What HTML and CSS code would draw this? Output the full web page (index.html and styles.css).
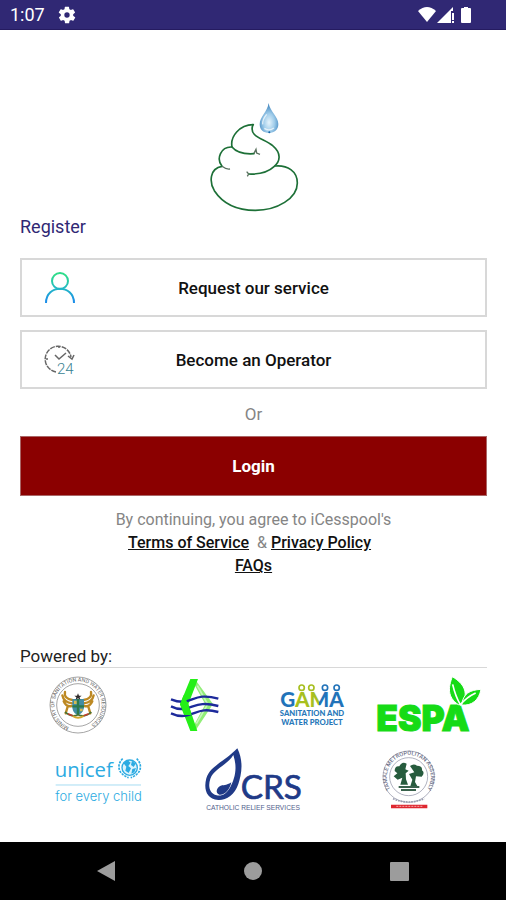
FILE: index.html
```html
<!DOCTYPE html>
<html lang="en">
<head>
    <meta charset="UTF-8">
    <meta name="viewport" content="width=device-width, initial-scale=1.0">
    <title>iCesspool</title>
    <link rel="stylesheet" href="styles.css">
</head>
<body>

    <header class="status-bar">
        <span class="time">1:07</span>
        <svg class="gear" width="20" height="20" viewBox="0 0 24 24">
            <path fill="#fff" d="M19.4 13a7.500 7.500 0 0 0 0-2l2.100-1.600a.5.5 0 0 0 .1-.6l-2-3.500a.5.5 0 0 0-.6-.2l-2.500 1a7.300 7.300 0 0 0-1.700-1l-.4-2.600a.5.5 0 0 0-.5-.4h-4a.5.5 0 0 0-.5.4l-.4 2.600a7.700 7.700 0 0 0-1.700 1l-2.500-1a.5.5 0 0 0-.6.2l-2 3.500a.5.5 0 0 0 .1.6L4.600 11a8 8 0 0 0 0 2l-2.100 1.600a.5.5 0 0 0-.1.600l2 3.500c.1.200.4.300.6.200l2.500-1a7.300 7.300 0 0 0 1.700 1l.4 2.600c0 .3.200.4.5.4h4c.2 0 .5-.2.5-.4l.4-2.600a7.700 7.700 0 0 0 1.700-1l2.500 1c.2.100.5 0 .6-.2l2-3.500a.5.5 0 0 0-.1-.6zM12 15.200a3.200 3.200 0 1 1 0-6.400 3.200 3.200 0 0 1 0 6.400z"/>
        </svg>
        <svg class="signals" width="56" height="18" viewBox="0 0 56 18" fill="#fff">
            <path d="M0 5Q9-3 18 5L9 16z"/>
            <path d="M19 17L35 1v4h-2v12zM34 7h2v7h-2zM34 15h2v2h-2z"/>
            <path d="M46 1h4v1h2q1 0 1 1v13q0 1-1 1h-8q-1 0-1-1V3q0-1 1-1h2z"/>
        </svg>
    </header>

    <main class="container">
        <svg class="logo" width="90" height="112" viewBox="27 18 270 336">
            <defs>
                <radialGradient id="water" cx="50%" cy="65%" r="60%">
                    <stop offset="0" stop-color="#e6f4fc"/>
                    <stop offset="0.500" stop-color="#9fccea"/>
                    <stop offset="1" stop-color="#3f84bd"/>
                </radialGradient>
            </defs>
            <g fill="none" stroke="#1d7037" stroke-width="5" stroke-linecap="round" stroke-linejoin="round">
                <path d="M160 89C118 90 90 124 96 156C62 154 48 192 66 214C28 220 28 262 43 287C70 328 115 346 166 346C232 346 292 310 292 264C292 228 262 210 226 213"/>
                <path d="M159 89C144 127 194 130 218 152C246 176 240 200 222 215C202 234 174 238 146 237"/>
                <path d="M96 156C109 172 132 178 162 176"/>
            </g>
            <path d="M66 214Q79 224 90 222M162 175L168 163L170 174L180 178M146 237L140 230M146 237L142 244" fill="none" stroke="#59705e" stroke-width="4"/>
            <path d="M206 24C203 49 179 65 179 88C179 105 191 114 207 114C224 114 235 103 235 87C235 65 209 48 206 24z" fill="url(#water)"/>
            <path d="M200 58C190 70 187 78 188 88M193 100Q207 110 222 99" fill="none" stroke="#fff" stroke-width="4" opacity="0.700"/>
            <circle cx="208" cy="112" r="3" fill="#1765a8"/>
        </svg>

        <h1>Register</h1>

        <button class="option" type="button">
            <svg width="32" height="32" viewBox="0 0 32 32" fill="none" stroke-width="2">
                <defs>
                    <linearGradient id="person" x1="0" y1="0" x2="0" y2="32" gradientUnits="userSpaceOnUse">
                        <stop offset="0.100" stop-color="#2fdc8b"/>
                        <stop offset="0.500" stop-color="#22b9c4"/>
                        <stop offset="0.900" stop-color="#1d8fe8"/>
                    </linearGradient>
                </defs>
                <circle cx="16" cy="9" r="8" stroke="url(#person)"/>
                <path d="M2 31C2 12 30 12 30 31" stroke="url(#person)"/>
            </svg>
            <span>Request our service</span>
        </button>

        <button class="option" type="button">
            <svg width="32" height="32" viewBox="0 0 32 32" fill="none" stroke="#666">
                <path d="M12 28A13 13 0 1 1 27 13" stroke-width="1.500" stroke-dasharray="5 1"/>
                <path d="M24 12l4 3 2-4M11 11l4 4 7-6M15 2v2M2 15h2" stroke-width="1.500"/>
                <text x="13" y="30" font-family="Roboto, sans-serif" font-size="15" font-weight="300" fill="#397f92" stroke="none">24</text>
            </svg>
            <span>Become an Operator</span>
        </button>

        <p class="or">Or</p>

        <button class="login" type="button">Login</button>

        <p class="terms">
            By continuing, you agree to iCesspool's<br>
            <a href="#">Terms of Service</a>&nbsp; &amp; <a href="#">Privacy Policy</a>&nbsp;&nbsp;<br>
            <a href="#">FAQs</a>
        </p>

        <section class="partners">
            <h2>Powered by:</h2>

            <div class="row four">
                <!-- ministry seal -->
                <svg width="58" height="58" viewBox="0 0 174 174">
                    <defs><path id="ring" d="M60 153A71 71 0 1 1 114 153"/></defs>
                    <g fill="none" stroke="#777" stroke-width="2">
                        <circle cx="87" cy="87" r="84"/>
                        <circle cx="87" cy="87" r="64"/>
                    </g>
                    <text font-family="Roboto, sans-serif" font-size="16" fill="#666"><textPath href="#ring">MINISTRY OF SANITATION AND WATER RESOURCES</textPath></text>
                    <g fill="none" stroke="#bd8923" stroke-width="7" stroke-linecap="round">
                        <path d="M48 48Q44 68 70 72M40 58Q44 80 70 82M44 76Q52 94 68 90M56 92L50 112"/>
                        <path d="M126 48Q130 68 104 72M134 58Q130 80 104 82M130 76Q122 94 106 90M118 92L124 112"/>
                    </g>
                    <path d="M70 69H105V96Q101 113 87 117Q73 113 70 96z" fill="#438da4"/>
                    <path d="M87 69V116M70 91H105" stroke="#2c794b" stroke-width="7"/>
                    <path d="M75 74h8v10h-8zM93 98h8v8h-8z" fill="#d5ba52"/>
                    <path d="M87 52l3 7h8l-6 5 2 7-7-4-7 4 2-7-6-5h8z" fill="#302b2b"/>
                    <path d="M48 108Q67 126 87 116Q109 126 127 108" fill="none" stroke="#447237" stroke-width="5"/>
                    <path d="M57 113l14 6M104 119l15-6" stroke="#c13f2d" stroke-width="5"/>
                    <path d="M71 120Q87 131 104 120" fill="none" stroke="#d3a52d" stroke-width="6"/>
                </svg>

                <!-- diamond with waves -->
                <svg width="50" height="54" viewBox="480 115 150 162">
                    <path d="M556 120L609 193L556 273L543 273L586 194L545 120z" fill="#91ee78"/>
                    <path d="M562 138L593 194L559 252" fill="none" stroke="#c8f5bd" stroke-width="5"/>
                    <path d="M541 118H564L535 194L562 274H541L510 194z" fill="#25ef18"/>
                    <g fill="none" stroke="#1d2a9b" stroke-width="7">
                        <path d="M483 179Q505 188 524 186C554 180 568 161 625 177"/>
                        <path d="M483 200Q505 211 526 207C558 199 571 185 625 199"/>
                        <path d="M483 221Q507 232 528 228C562 220 574 203 625 217"/>
                    </g>
                    <path d="M521 166L535 194L545 226H523L510 194z" fill="#25ef18"/>
                </svg>

                <!-- GAMA -->
                <svg width="68" height="44" viewBox="55 40 204 132">
                    <defs>
                        <linearGradient id="letters">
                            <stop offset="0.230" stop-color="#2273b9"/>
                            <stop offset="0.230" stop-color="#a7bf20"/>
                            <stop offset="0.600" stop-color="#a7bf20"/>
                            <stop offset="0.600" stop-color="#2273b9"/>
                        </linearGradient>
                    </defs>
                    <text x="157" y="111" text-anchor="middle" font-family="Lato, sans-serif" font-weight="900" font-size="62" fill="url(#letters)">GAMA</text>
                    <g fill="#fff" stroke-width="5">
                        <circle cx="126" cy="54" r="8" stroke="#a7bf20"/>
                        <circle cx="155" cy="54" r="8" stroke="#a7bf20"/>
                        <circle cx="196" cy="54" r="8" stroke="#2273b9"/>
                        <circle cx="231" cy="54" r="8" stroke="#2273b9"/>
                    </g>
                    <g font-family="Lato, sans-serif" font-weight="900" font-size="23" fill="#2878b9" text-anchor="middle">
                        <text x="157" y="138">SANITATION AND</text>
                        <text x="157" y="165">WATER PROJECT</text>
                    </g>
                </svg>

                <!-- ESPA -->
                <svg width="106" height="58" viewBox="347 15 318 174">
                    <text x="348" y="180" font-family="Inter, sans-serif" font-weight="900" font-size="106" fill="#16db16" stroke="#16db16" stroke-width="3">ESPA</text>
                    <path d="M594 101C560 78 564 49 576 17C609 37 626 62 606 101z" fill="#16db16" stroke="#fff" stroke-width="3"/>
                    <path d="M604 102C608 68 628 57 662 55C656 87 635 105 604 102z" fill="#16db16" stroke="#fff" stroke-width="3"/>
                    <path d="M577 40Q585 75 600 101Q620 78 646 66" fill="none" stroke="#fff" stroke-width="5"/>
                </svg>
            </div>

            <div class="row three">
                <!-- unicef -->
                <svg width="88" height="48" viewBox="43 47 264 144">
                    <text x="45" y="109" font-family="Open Sans, sans-serif" font-size="61" fill="#2cabe2">unicef</text>
                    <circle cx="270" cy="82" r="23" fill="#ddf3fc" stroke="#2cabe2" stroke-width="4"/>
                    <path d="M251 68L264 60L273 67L266 77L274 84L267 98L257 91L260 79zM277 61L288 70L282 80L274 74zM278 86L289 83L284 96L275 100z" fill="#2cabe2"/>
                    <path d="M249 55C229 75 236 102 267 112M291 55C311 75 304 102 273 112" fill="none" stroke="#2cabe2" stroke-width="5" stroke-dasharray="7 3"/>
                    <path d="M48 134H304" stroke="#79caed" stroke-width="2"/>
                    <text x="47" y="181" font-family="Inter, sans-serif" font-size="39" font-weight="300" fill="#2cabe2">for every child</text>
                </svg>

                <!-- CRS -->
                <svg width="98" height="64" viewBox="30 24 294 192">
                    <path d="M130 25C151 67 141 108 133 132C122 165 97 181 73 180C35 178 29 144 37 115C48 78 89 67 130 25z" fill="#203a87"/>
                    <path d="M118 45C132 87 121 118 109 141C98 162 84 169 68 166C45 160 42 137 49 116C60 86 98 77 118 45z" fill="#fff"/>
                    <path d="M112 127C107 151 91 166 76 164C62 158 69 141 80 137C93 135 100 135 112 127z" fill="#203a87"/>
                    <text x="140" y="178" font-family="Lato, sans-serif" font-size="100" fill="#203a87" stroke="#203a87" stroke-width="2">CRS</text>
                    <text x="177" y="211" text-anchor="middle" font-family="Liberation Sans, sans-serif" font-size="20" fill="#525e8c">CATHOLIC RELIEF SERVICES</text>
                </svg>

                <!-- Tamale Metropolitan Assembly -->
                <svg width="56" height="60" viewBox="32 31 168 180">
                    <defs><path id="arc" d="M74 163A66 66 0 1 1 157 163"/></defs>
                    <g fill="none" stroke="#888ba0" stroke-width="2">
                        <circle cx="115" cy="111" r="77"/>
                        <circle cx="115" cy="111" r="57"/>
                    </g>
                    <text font-family="Roboto, sans-serif" font-size="17" font-weight="500" fill="#6a6d86"><textPath href="#arc" startOffset="50%" text-anchor="middle">TAMALE METROPOLITAN ASSEMBLY</textPath></text>
                    <path d="M73 94Q73 78 87 80Q95 63 109 72L105 89L115 93L106 101L107 119L113 135H90L96 114L82 120L70 110L81 101zM119 79Q130 70 140 78Q157 78 155 92Q165 100 154 111L137 110L134 127L143 143H119L126 120L116 103L132 98z" fill="#275c3e"/>
                    <path d="M85 142H147M92 151H137" stroke="#39624c" stroke-width="6"/>
                    <path d="M68 177Q115 197 162 177" fill="none" stroke="#999caf" stroke-width="5" stroke-dasharray="5 3"/>
                    <path d="M62 195H171V206H62z" fill="#de2730"/>
                    <path d="M78 200H156" stroke="#f6aaa9" stroke-width="3" stroke-dasharray="6 3"/>
                </svg>
            </div>
        </section>
    </main>

    <nav class="nav-bar">
        <button type="button" aria-label="Back">
            <svg width="20" height="22" viewBox="0 0 20 22"><path d="M0 11L18 1V21z" fill="#9c9c9c"/></svg>
        </button>
        <button type="button" aria-label="Home">
            <svg width="20" height="22" viewBox="0 0 20 22"><circle cx="10" cy="11" r="9" fill="#9c9c9c"/></svg>
        </button>
        <button type="button" aria-label="Recent apps">
            <svg width="20" height="22" viewBox="0 0 20 22"><rect x="1" y="2" width="19" height="19" rx="1" fill="#9c9c9c"/></svg>
        </button>
    </nav>

</body>
</html>
```

FILE: styles.css
```css
* {
    box-sizing: border-box;
}
body {
    margin: 0;
    min-height: 100vh;
    display: flex;
    flex-direction: column;
    font-family: Roboto, sans-serif;
    background-color: #fff;
    color: #222;
}
svg {
    display: block;
    overflow: visible;
}
button {
    font-family: inherit;
    cursor: pointer;
}
.status-bar {
    display: flex;
    align-items: center;
    height: 30px;
    padding: 0 32px 0 10px;
    background-color: #302874;
    border-bottom: 1px solid #251b60;
    color: #fff;
}
.time {
    font-size: 18px;
}
.gear {
    margin-left: 12px;
}
.signals {
    margin-left: auto;
}
.container {
    flex: 1;
    display: flex;
    flex-direction: column;
    padding: 71px 19px 30px 20px;
}
.logo {
    align-self: center;
}
h1 {
    margin: 3px 0 20px;
    font-size: 18px;
    font-weight: 400;
    line-height: 22px;
    color: #302874;
}
.option {
    display: grid;
    grid-template-columns: 32px 1fr 32px;
    align-items: center;
    height: 59px;
    margin-bottom: 13px;
    padding: 0 22px;
    border: 2px solid #d8d8d8;
    background-color: #fff;
    color: #111;
    font-size: 17px;
    font-weight: 500;
}
.or {
    margin: 0 0 10px;
    font-size: 17px;
    line-height: 24px;
    text-align: center;
    color: #858585;
}
.login {
    height: 60px;
    border: 1px solid #a66;
    background-color: #8b0000;
    color: #fff;
    font-size: 17px;
    font-weight: 700;
}
.terms {
    margin: 12px 0 0;
    font-size: 16px;
    line-height: 23px;
    text-align: center;
    color: #858585;
}
.terms a {
    color: #111;
    font-weight: 500;
}
.partners {
    margin-top: auto;
}
h2 {
    margin: 0;
    font-size: 17px;
    font-weight: 400;
    line-height: 22px;
    border-bottom: 1px solid #d8d8d8;
}
.row {
    display: grid;
    align-items: center;
    justify-items: center;
}
.four {
    grid-template-columns: repeat(4, 1fr);
    margin-top: 8px;
}
.three {
    grid-template-columns: repeat(3, 1fr);
    margin-top: 14px;
}
.nav-bar {
    display: flex;
    justify-content: center;
    gap: 126px;
    height: 58px;
    background-color: #000;
}
.nav-bar button {
    padding: 0;
    border: none;
    background: none;
}
```
